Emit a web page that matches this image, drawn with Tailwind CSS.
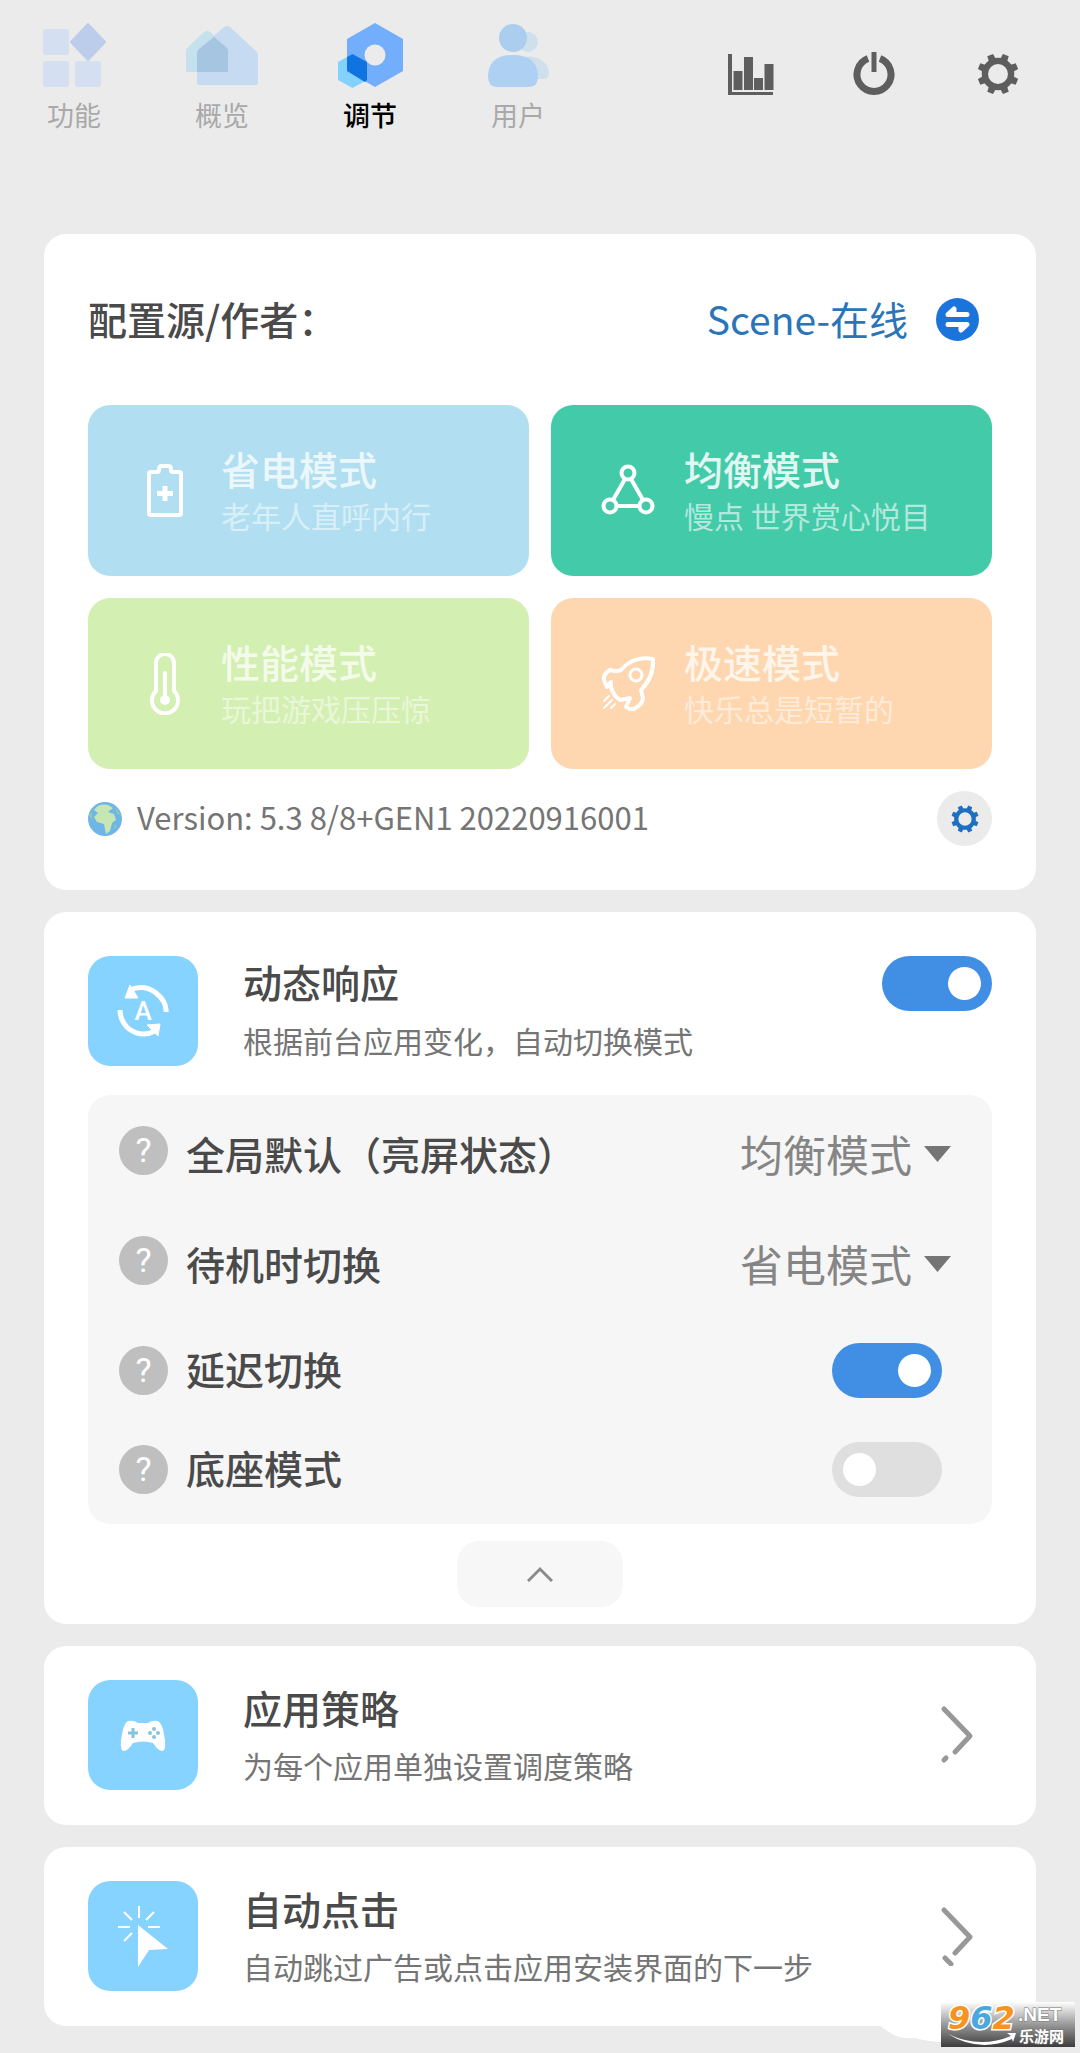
<!DOCTYPE html>
<html lang="zh-CN">
<head>
    <meta charset="UTF-8">
    <meta name="viewport" content="width=device-width, initial-scale=1.0">
    <title>Scene - 调节</title>

    <script src="https://cdn.jsdelivr.net/npm/@tailwindcss/browser@4"></script>
</head>
<body class="relative bg-[#ebebeb] min-h-screen pb-[27px] font-['Noto_Sans_CJK_SC',sans-serif] text-[#4a4a4a]">
    <!-- Shared icons -->
    <svg class="hidden">
        <symbol id="gear" viewBox="0 0 40 40">
            <circle cx="20" cy="20" r="12.5" fill="none" stroke="currentColor" stroke-width="6" />
            <g fill="currentColor">
                <path id="tooth" d="M16.500 6 L17 0.500 H23 L23.500 6 Z" transform="rotate(22.500 20 20)" />
                <use href="#tooth" transform="rotate(45 20 20)" />
                <use href="#tooth" transform="rotate(90 20 20)" />
                <use href="#tooth" transform="rotate(135 20 20)" />
                <use href="#tooth" transform="rotate(180 20 20)" />
                <use href="#tooth" transform="rotate(225 20 20)" />
                <use href="#tooth" transform="rotate(270 20 20)" />
                <use href="#tooth" transform="rotate(315 20 20)" />
            </g>
        </symbol>
    </svg>

    <!-- Header -->
    <header class="flex justify-between items-start pr-[58px] pt-[22px]">
        <nav class="flex text-[27px] leading-[42px] text-[#a9a9a9]">
            <a href="#" class="w-[148px] flex flex-col items-center">
                <svg class="w-[66px] h-[72px]" viewBox="0 0 66 72">
                    <g fill="#d5dff2">
                        <rect x="2" y="7" width="26" height="26" rx="2" />
                        <rect x="2" y="39" width="26" height="26" rx="2" />
                        <rect x="34" y="39" width="26" height="26" rx="2" />
                    </g>
                    <path d="M47 2 L64 20 L47 38 L30 20 Z" fill="#bccdeb" stroke="#bccdeb" stroke-width="2" stroke-linejoin="round" />
                </svg>
                <span>功能</span>
            </a>
            <a href="#" class="w-[148px] flex flex-col items-center">
                <svg class="w-[76px] h-[72px]" viewBox="0 0 76 72">
                    <path d="M2 29 Q2 27 4 25 L20 10 Q23 8 26 10 L42 25 Q44 27 44 29 V50 H2 Z" fill="#c5e1ed" />
                    <path d="M13 31 Q13 29 15 27 L40 5 Q43 3 46 5 L72 29 Q74 31 74 33 V61 Q74 63 72 63 H15 Q13 63 13 61 Z" fill="#c6dbf2" />
                    <path d="M13 31 Q13 29 15 27 L30 15 L42 25 Q44 27 44 29 V50 H13 Z" fill="#a6c5e1" />
                </svg>
                <span>概览</span>
            </a>
            <a href="#" class="w-[148px] flex flex-col items-center font-medium text-black">
                <svg class="w-[66px] h-[72px]" viewBox="0 0 66 72">
                    <path d="M38 1 L66 17 V49 L38 65 L10 49 V17 Z" fill="#72aefc" />
                    <path d="M15.500 32 L30 40 V58 L15.500 66 L1 58 V40 Z" fill="#84d0ff" />
                    <path d="M10 35 L15.500 32 L30 40 V58 L28 60 L10 49 Z" fill="#1073df" />
                    <circle cx="38" cy="33" r="10.500" fill="#ebebeb" />
                </svg>
                <span>调节</span>
            </a>
            <a href="#" class="w-[148px] flex flex-col items-center">
                <svg class="w-[62px] h-[72px]" viewBox="0 0 62 72">
                    <circle cx="41" cy="20" r="10" fill="#cfe0ec" />
                    <path d="M40 34 Q61 36 62 51 Q62 57 56 57 H40 Z" fill="#cfe0ec" />
                    <circle cx="26" cy="16" r="14" fill="#abcdee" />
                    <path d="M1 55 Q1 33 26 33 Q51 33 51 55 Q51 65 41 65 H11 Q1 65 1 55 Z" fill="#aed0f2" />
                </svg>
                <span>用户</span>
            </a>
        </nav>
        <div class="flex gap-[76px] pt-[28px] text-[#5e5e5e]">
            <button type="button" aria-label="统计">
                <svg class="size-[48px]" viewBox="0 0 48 48" fill="currentColor">
                    <path d="M2 4 H6 V42 H47 V45 H2 Z" />
                    <rect x="7.500" y="21" width="9" height="19" />
                    <rect x="18" y="7" width="9" height="33" />
                    <rect x="28" y="28" width="9" height="12" />
                    <rect x="38.500" y="14" width="9" height="26" />
                </svg>
            </button>
            <button type="button" aria-label="电源">
                <svg class="size-[48px]" viewBox="0 0 48 48" fill="none" stroke="currentColor">
                    <path d="M18 8.500 A17 17 0 1 0 30 8.500" stroke-width="7" />
                    <path d="M24 2 V22" stroke-width="5" />
                </svg>
            </button>
            <button type="button" aria-label="设置" class="flex size-[48px] items-center justify-center">
                <svg class="size-[42px]"><use href="#gear" /></svg>
            </button>
        </div>
    </header>

    <main class="px-[44px] pt-[98px] flex flex-col gap-[22px]">
        <!-- Profile source and modes -->
        <section class="bg-white rounded-[22px] px-[44px] pt-[55px] pb-[44px]">
            <div class="flex items-center justify-between h-[60px] text-[39px] leading-[56px]">
                <h2 class="pb-[2px] font-medium">配置源/作者：</h2>
                <a href="#" class="flex items-center gap-[28px] pr-[13px] text-[#2a74b8]">
                    <span class="pb-[2px]">Scene-在线</span>
                    <svg class="size-[43px]" viewBox="0 0 43 43">
                        <circle cx="21.500" cy="21.500" r="21.500" fill="#1b73dc" />
                        <path d="M31 16.500 H12 L18 11 V15 M12 26.500 H31 L25 32 V28" fill="none" stroke="#fff" stroke-width="5" stroke-linecap="round" stroke-linejoin="round" />
                    </svg>
                </a>
            </div>

            <div class="grid grid-cols-2 gap-[22px] mt-[56px] text-left">
                <button type="button" class="flex items-center h-[171px] pl-[46px] gap-[25px] rounded-[22px] bg-[#b1dff1] text-left">
                    <svg class="size-[62px]" viewBox="0 0 62 62" fill="none" stroke="#fff" stroke-width="4" stroke-linejoin="round">
                        <path d="M17 12 H23 Q25 12 25 10 V9 Q25 6 28 6 H34 Q37 6 37 9 V10 Q37 12 39 12 H45 Q47 12 47 14 V53 Q47 55 45 55 H17 Q15 55 15 53 V14 Q15 12 17 12 Z" />
                        <path d="M31 26 V41 M23 33.500 H39" stroke-width="5" />
                    </svg>
                    <span class="flex flex-col text-white/75">
                        <span class="text-[39px] leading-[48px] font-medium">省电模式</span>
                        <span class="text-[30px] leading-[46px] text-white/50">老年人直呼内行</span>
                    </span>
                </button>
                <button type="button" class="flex items-center h-[171px] pl-[46px] gap-[25px] rounded-[22px] bg-[#42caa9] text-left">
                    <svg class="size-[62px]" viewBox="0 0 62 62" fill="none" stroke="#fff" stroke-width="4">
                        <circle cx="31" cy="13" r="6.500" />
                        <circle cx="13" cy="46" r="6.500" />
                        <circle cx="49" cy="46" r="6.500" />
                        <path d="M28 19 L16 40 M34 19 L46 40 M20 46 H42" />
                    </svg>
                    <span class="flex flex-col text-white/85">
                        <span class="text-[39px] leading-[48px] font-medium">均衡模式</span>
                        <span class="text-[30px] leading-[46px] text-white/60">慢点 世界赏心悦目</span>
                    </span>
                </button>
                <button type="button" class="flex items-center h-[171px] pl-[46px] gap-[25px] rounded-[22px] bg-[#d3efb2] text-left">
                    <svg class="size-[62px]" viewBox="0 0 62 62" fill="none" stroke="#fff" stroke-width="4">
                        <path d="M22 38 V10 A9 9 0 0 1 40 10 V38 A13 13 0 1 1 22 38 Z" />
                        <path d="M31 20 V46" stroke-linecap="round" />
                        <circle cx="31" cy="47" r="5" fill="#fff" stroke="none" />
                    </svg>
                    <span class="flex flex-col text-white/75">
                        <span class="text-[39px] leading-[48px] font-medium">性能模式</span>
                        <span class="text-[30px] leading-[46px] text-white/50">玩把游戏压压惊</span>
                    </span>
                </button>
                <button type="button" class="flex items-center h-[171px] pl-[46px] gap-[25px] rounded-[22px] bg-[#fed7b1] text-left">
                    <svg class="size-[62px]" viewBox="0 0 62 62" fill="none" stroke="#fff" stroke-width="4" stroke-linejoin="round" stroke-linecap="round">
                        <path d="M56 6 Q46 4 38 7 Q30 10 24 17 Q20 19 13 17 Q6 21 7 27 L10 34 L14 29 Q13 35 17 41 Q20 46 24 47 L33 45 L29 54 Q33 57 37 56 Q46 51 46 45 L44 37 Q57 24 56 6 Z" />
                        <circle cx="39" cy="22" r="6" stroke-width="3" />
                        <path d="M12 43 L7 48 M15 47 L7 55 M18 51 L14 55" stroke-width="2" />
                    </svg>
                    <span class="flex flex-col text-white/75">
                        <span class="text-[39px] leading-[48px] font-medium">极速模式</span>
                        <span class="text-[30px] leading-[46px] text-white/50">快乐总是短暂的</span>
                    </span>
                </button>
            </div>

            <div class="flex items-center mt-[22px] h-[55px] text-[#757575]">
                <svg class="size-[34px]" viewBox="0 0 34 34">
                    <circle cx="17" cy="17" r="17" fill="#6fb5e8" />
                    <path d="M6 8 Q11 1 20 3 L25 6 L20 10 L26 12 L28 18 L24 21 L22 29 L18 32 L16 22 L9 20 L6 15 L10 11 Z" fill="#c6e6b4" />
                    <path d="M1 13 L4 10 L4 18 Z M27 5 L33 13 L29 12 Z M26 24 L29 22 L27 28 Z" fill="#8ecf9e" />
                </svg>
                <p class="pl-[15px] pb-[2px] grow text-[31px]">Version: 5.3 8/8+GEN1 20220916001</p>
                <button type="button" aria-label="配置设置" class="flex items-center justify-center size-[55px] rounded-full bg-[#ebebeb] text-[#1f6fc0]">
                    <svg class="size-[28px]"><use href="#gear" /></svg>
                </button>
            </div>
        </section>

        <!-- Dynamic response -->
        <section class="bg-white rounded-[22px] px-[44px] pt-[44px] pb-[17px]">
            <div class="flex items-start">
                <svg class="size-[110px] rounded-[22px] bg-[#87d3ff]" viewBox="0 0 110 110">
                    <path d="M42 34 Q56 28 68 37 Q79 46 78 56 M32 54 Q32 65 41 73 Q54 82 67 75" fill="none" stroke="#fff" stroke-width="5" />
                    <path d="M42 29 L37 42 L50 42 Z M59 69 L72 68 L70 80 Z" fill="#fff" stroke="#fff" stroke-linejoin="round" />
                    <text x="55" y="64" text-anchor="middle" font-family="Roboto" font-size="26" font-weight="500" fill="#fff">A</text>
                </svg>
                <div class="grow pl-[45px]">
                    <h2 class="text-[39px] leading-[50px] font-medium"><label for="dynamic">动态响应</label></h2>
                    <p class="pt-[11px] text-[30px] leading-[46px] text-[#757575]">根据前台应用变化，自动切换模式</p>
                </div>
                <input type="checkbox" id="dynamic" checked class="appearance-none shrink-0 w-[110px] h-[55px] p-[11px] rounded-full bg-[#dfdfdf] checked:bg-[#418ee5] before:block before:size-[33px] before:rounded-full before:bg-white checked:before:ml-auto">
            </div>

            <div class="mt-[29px] pl-[31px] pr-[50px] pb-[11px] rounded-[22px] bg-[#f6f6f6] text-[39px]">
                <div class="flex items-center h-[110px]">
                    <button type="button" aria-label="说明" class="size-[49px] rounded-full bg-[#bfbfbf] font-['Roboto'] text-[34px] leading-[49px] text-white">?</button>
                    <label for="default-mode" class="grow pl-[18px] pt-[6px] font-medium">全局默认（亮屏状态）</label>
                    <div class="relative -mr-[9px] pt-[6px]">
                        <select id="default-mode" class="appearance-none pr-[39px] text-[43px] leading-[64px] text-[#858585]">
                            <option>均衡模式</option>
                            <option>省电模式</option>
                            <option>性能模式</option>
                            <option>极速模式</option>
                        </select>
                        <svg class="absolute right-0 top-[31px] w-[27px] h-[16px] pointer-events-none" viewBox="0 0 27 16"><path d="M0 0 H27 L13.500 16 Z" fill="#757575" /></svg>
                    </div>
                </div>
                <div class="flex items-center h-[110px]">
                    <button type="button" aria-label="说明" class="size-[49px] rounded-full bg-[#bfbfbf] font-['Roboto'] text-[34px] leading-[49px] text-white">?</button>
                    <label for="standby-mode" class="grow pl-[18px] pt-[6px] font-medium">待机时切换</label>
                    <div class="relative -mr-[9px] pt-[6px]">
                        <select id="standby-mode" class="appearance-none pr-[39px] text-[43px] leading-[64px] text-[#858585]">
                            <option>省电模式</option>
                            <option>均衡模式</option>
                            <option>性能模式</option>
                            <option>极速模式</option>
                        </select>
                        <svg class="absolute right-0 top-[31px] w-[27px] h-[16px] pointer-events-none" viewBox="0 0 27 16"><path d="M0 0 H27 L13.500 16 Z" fill="#757575" /></svg>
                    </div>
                </div>
                <div class="flex items-center h-[110px]">
                    <button type="button" aria-label="说明" class="size-[49px] rounded-full bg-[#bfbfbf] font-['Roboto'] text-[34px] leading-[49px] text-white">?</button>
                    <label for="delay" class="grow pl-[18px] pb-[4px] font-medium">延迟切换</label>
                    <input type="checkbox" id="delay" checked class="appearance-none w-[110px] h-[55px] p-[11px] rounded-full bg-[#dfdfdf] checked:bg-[#418ee5] before:block before:size-[33px] before:rounded-full before:bg-white checked:before:ml-auto">
                </div>
                <div class="flex items-center h-[88px]">
                    <button type="button" aria-label="说明" class="size-[49px] rounded-full bg-[#bfbfbf] font-['Roboto'] text-[34px] leading-[49px] text-white">?</button>
                    <label for="dock" class="grow pl-[18px] pb-[4px] font-medium">底座模式</label>
                    <input type="checkbox" id="dock" class="appearance-none w-[110px] h-[55px] p-[11px] rounded-full bg-[#dfdfdf] checked:bg-[#418ee5] before:block before:size-[33px] before:rounded-full before:bg-white checked:before:ml-auto">
                </div>
            </div>

            <button type="button" aria-label="收起" class="flex items-center justify-center mx-auto mt-[17px] w-[166px] h-[66px] rounded-[22px] bg-[#f7f7f7]">
                <svg class="w-[26px] h-[16px]" viewBox="0 0 26 16" fill="none" stroke="#8a8a8a" stroke-width="3"><path d="M1 15 L13 3 L25 15" /></svg>
            </button>
        </section>

        <!-- App policy -->
        <a href="#" class="flex bg-white rounded-[22px] pl-[44px] pr-[62px] pt-[34px] pb-[35px]">
            <svg class="size-[110px] rounded-[22px] bg-[#87d3ff]" viewBox="0 0 110 110">
                <path d="M40 41 Q46 40 50 43 H60 Q64 40 70 41 Q74 43 76 54 Q79 68 75 71 Q71 72 65 63 Q55 60 45 63 Q39 72 35 71 Q31 68 34 54 Q36 43 40 41 Z" fill="#fff" />
                <path d="M45 48 V58 M40 53 H50" stroke="#87c3dc" stroke-width="3" />
                <g fill="#87c3dc">
                    <circle cx="66" cy="49" r="2" />
                    <circle cx="66" cy="57" r="2" />
                    <circle cx="62" cy="53" r="2" />
                    <circle cx="70" cy="53" r="2" />
                </g>
            </svg>
            <div class="grow pl-[45px]">
                <h2 class="text-[39px] leading-[54px] font-medium">应用策略</h2>
                <p class="pt-[8px] text-[30px] leading-[46px] text-[#757575]">为每个应用单独设置调度策略</p>
            </div>
            <svg class="self-center w-[34px] h-[60px]" viewBox="0 0 34 60" fill="none" stroke="#989898" stroke-width="5" stroke-linecap="round" stroke-linejoin="round"><path d="M4 4 L30 31 L15 47 M4 55 L6 53" /></svg>
        </a>

        <!-- Auto click -->
        <a href="#" class="flex bg-white rounded-[22px] pl-[44px] pr-[62px] pt-[34px] pb-[35px]">
            <svg class="size-[110px] rounded-[22px] bg-[#87d3ff]" viewBox="0 0 110 110">
                <path d="M50 44 L80 68 L61 69 L50 86 Z" fill="#fff" />
                <path d="M51 25 V37 M36 31 L44 39 M66 31 L58 39 M30 46 H42 M60 46 H72 M36 60 L44 52" stroke="#fff" stroke-width="2" />
            </svg>
            <div class="grow pl-[45px]">
                <h2 class="text-[39px] leading-[54px] font-medium">自动点击</h2>
                <p class="pt-[8px] text-[30px] leading-[46px] text-[#757575]">自动跳过广告或点击应用安装界面的下一步</p>
            </div>
            <svg class="self-center w-[34px] h-[60px]" viewBox="0 0 34 60" fill="none" stroke="#989898" stroke-width="5" stroke-linecap="round" stroke-linejoin="round"><path d="M4 4 L30 31 L15 47 M5 52 L11 58" /></svg>
        </a>
    </main>

    <!-- Site badge -->
    <div class="absolute right-[5px] bottom-[6px]">
        <svg class="w-[200px] h-[46px] overflow-visible" viewBox="0 0 200 46">
            <defs>
                <linearGradient id="badge" x1="0" y1="0" x2="0" y2="1">
                    <stop offset="0" stop-color="#fff" />
                    <stop offset="0.500" stop-color="#999" />
                    <stop offset="1" stop-color="#3c3c3c" />
                </linearGradient>
            </defs>
            <path d="M0 20 Q8 28 16 32 Q22 38 40 37 Q55 41 66 41 V10 H0 Z" fill="#fff" />
            <rect x="66" y="1" width="134" height="45" fill="url(#badge)" />
            <path d="M73 33 Q105 48 136 35 L132 32 L141 32 L138 41 L137 38 Q104 52 73 33 Z" fill="#fff" />
            <text x="73" y="28" font-family="DejaVu Sans" font-size="32" font-weight="700" font-style="italic" stroke="#fff" stroke-width="3" paint-order="stroke"><tspan fill="#f7931e">9</tspan><tspan fill="#4aa8e0">6</tspan><tspan fill="#f7931e">2</tspan></text>
            <g fill="#fff" stroke="#777" stroke-width="1" paint-order="stroke" font-weight="700">
                <text x="143" y="20" font-family="Liberation Sans" font-size="19">.NET</text>
                <text x="144" y="41" font-family="Noto Sans CJK SC" font-size="15">乐游网</text>
            </g>
        </svg>
    </div>
</body>
</html>
